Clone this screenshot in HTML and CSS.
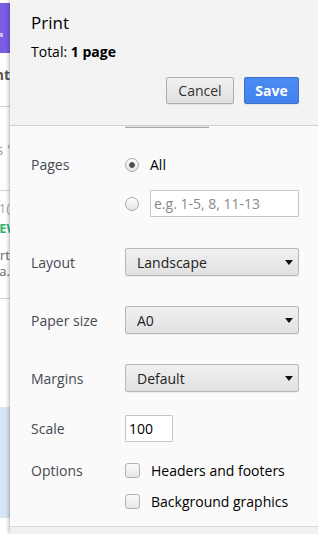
FILE: index.html
```html
<!DOCTYPE html>
<html lang="en">
<head>
    <meta charset="UTF-8">
    <meta name="viewport" content="width=device-width, initial-scale=1.0">
    <title>Print</title>
    <link rel="stylesheet" href="styles.css">
</head>
<body>
    <div class="screen">
        <!-- page behind the print dialog, only its right edge shows -->
        <div class="page">
            <div class="page-bar"><span class="bar-mark"></span></div>
            <div class="page-block block-title">
                <div class="frag frag-title"><span>Document</span></div>
            </div>
            <div class="page-block block-list">
                <div class="frag frag-muted"><span>Results '</span></div>
            </div>
            <div class="page-block block-item">
                <div class="frag frag-meta"><span>Updated 1(</span></div>
                <div class="frag frag-new"><span>NEW</span></div>
                <div class="frag frag-text"><span>Support</span></div>
                <div class="frag frag-text"><span>Read more a.</span></div>
            </div>
            <div class="page-gap"></div>
            <div class="page-selected"></div>
        </div>

        <div class="dialog">
            <header class="dialog-head">
                <h1>Print</h1>
                <div class="total">Total: <b>1 page</b></div>
                <div class="buttons">
                    <button class="btn">Cancel</button>
                    <button class="btn btn-primary">Save</button>
                </div>
            </header>

            <div class="dialog-body">
                <div class="stub"></div>

                <div class="section section-pages">
                    <div class="label">Pages</div>
                    <div class="controls">
                        <label class="row"><input type="radio" name="pages" checked>All</label>
                        <div class="row">
                            <input type="radio" name="pages">
                            <input type="text" class="text-input" placeholder="e.g. 1-5, 8, 11-13">
                        </div>
                    </div>
                </div>

                <div class="section section-layout">
                    <div class="label">Layout</div>
                    <div class="controls">
                        <div class="select"><select><option>Landscape</option><option>Portrait</option></select></div>
                    </div>
                </div>

                <div class="section">
                    <div class="label">Paper size</div>
                    <div class="controls">
                        <div class="select"><select><option>A0</option><option>A4</option></select></div>
                    </div>
                </div>

                <div class="section">
                    <div class="label">Margins</div>
                    <div class="controls">
                        <div class="select"><select><option>Default</option><option>None</option></select></div>
                    </div>
                </div>

                <div class="section section-scale">
                    <div class="label">Scale</div>
                    <div class="controls">
                        <input type="text" class="text-input scale-input" value="100">
                    </div>
                </div>

                <div class="section section-options">
                    <div class="label">Options</div>
                    <div class="controls">
                        <label class="row"><input type="checkbox">Headers and footers</label>
                        <label class="row"><input type="checkbox">Background graphics</label>
                    </div>
                </div>
            </div>

            <div class="dialog-foot"></div>
        </div>
    </div>
</body>
</html>
```

FILE: styles.css
```css
* {
    box-sizing: border-box;
}
body {
    margin: 0;
    font-family: "Open Sans", "Liberation Sans", Arial, sans-serif;
    font-size: 14px;
    color: #000;
}
.screen {
    display: flex;
    height: 534px;
    overflow: hidden;
}

/* page behind */
.page {
    width: 10px;
    flex-shrink: 0;
    background: #fff;
    display: flex;
    flex-direction: column;
}
.page-bar {
    height: 50px;
    margin-top: 3px;
    background: #7b5ee4;
    padding-top: 30px;
}
.bar-mark {
    display: block;
    width: 3px;
    height: 4px;
    background: #c9bdf3;
}
.page-block {
    border-bottom: 1px solid #d4d4d4;
}
.block-title {
    height: 54px;
    padding-top: 12px;
}
.block-list {
    height: 84px;
    padding-top: 33px;
}
.block-item {
    height: 108px;
    padding-top: 7px;
}
.page-gap {
    height: 108px;
}
.page-selected {
    height: 111px;
    background: #d7e6f6;
}
.frag {
    display: flex;
    justify-content: flex-end;
    overflow: hidden;
    white-space: nowrap;
    line-height: 20px;
}
.frag-title {
    font-weight: 700;
    color: #555;
}
.frag-muted {
    color: #999;
}
.frag-meta {
    font-size: 13px;
    color: #9aa8b6;
}
.frag-new {
    font-weight: 700;
    font-size: 13px;
    color: #2db46e;
}
.frag-new span {
    margin-right: -9px;
}
.frag-text {
    font-size: 13px;
    color: #666;
    line-height: 14px;
}
.frag-text:nth-child(3) {
    margin-top: 10px;
}
.frag-text:nth-child(4) {
    margin-top: 2px;
}

/* dialog */
.dialog {
    flex: 1;
    min-width: 0;
    display: flex;
    flex-direction: column;
    background: #fafafa;
    box-shadow: -1px 0 4px rgba(0, 0, 0, 0.3);
}
.dialog-head {
    height: 126px;
    background: #f3f3f3;
    border-bottom: 1px solid #d2d2d2;
    padding: 12px 19px 0 21px;
}
h1 {
    margin: 0;
    font-size: 17px;
    font-weight: 400;
    line-height: 21px;
}
.total {
    margin-top: 10px;
    line-height: 18px;
}
.buttons {
    margin-top: 16px;
    display: flex;
    justify-content: flex-end;
    gap: 10px;
}
.btn {
    height: 27px;
    width: 68px;
    padding: 0;
    font: inherit;
    color: #333;
    border: 1px solid #adadad;
    border-radius: 2px;
    background: linear-gradient(#f1f1f1, #e0e0e0);
    box-shadow: 0 1px 0 rgba(0, 0, 0, 0.06);
}
.btn-primary {
    width: 55px;
    color: #fff;
    font-weight: 700;
    border-color: #3d70c8;
    background: linear-gradient(#4b8cf2, #4282ee);
}

.dialog-body {
    flex: 1;
    padding: 0 19px 0 21px;
}
.stub {
    margin-left: 94px;
    width: 84px;
    height: 2px;
    background: #dedede;
    border-bottom: 1px solid #a9a9a9;
}
.section {
    display: flex;
    margin-top: 30px;
}
.section-pages {
    margin-top: 23px;
}
.section-layout {
    margin-top: 31px;
}
.section-scale {
    margin-top: 23px;
}
.section-options {
    margin-top: 21px;
}
.label {
    width: 94px;
    flex-shrink: 0;
    height: 28px;
    display: flex;
    align-items: center;
    color: #454a52;
}
.section-pages .label,
.section-scale .label {
    height: 27px;
}
.section-options .label {
    height: 15px;
}
.controls {
    flex: 1;
    min-width: 0;
    display: flex;
    flex-direction: column;
    gap: 12px;
}
.section-options .controls {
    gap: 16px;
}
.row {
    display: flex;
    align-items: center;
    gap: 11px;
    height: 27px;
}
.section-options .row {
    height: 15px;
}

input[type="radio"] {
    appearance: none;
    margin: 0;
    width: 14px;
    height: 14px;
    flex-shrink: 0;
    border: 1px solid #aaa;
    border-radius: 50%;
    background: linear-gradient(#fdfdfd, #e4e4e4);
}
input[type="radio"]:checked {
    background: radial-gradient(circle, #505050 2.5px, transparent 3.2px), linear-gradient(#fdfdfd, #e4e4e4);
}
input[type="checkbox"] {
    appearance: none;
    margin: 0;
    width: 15px;
    height: 15px;
    flex-shrink: 0;
    border: 1px solid #b3b3b3;
    border-radius: 3px;
    background: linear-gradient(#fafafa, #e6e6e6);
}
.text-input {
    flex: 1;
    width: 100%;
    height: 27px;
    min-width: 0;
    padding: 0 3px;
    font: inherit;
    color: #000;
    background: #fff;
    border: 1px solid #c6c6c6;
    border-radius: 1px;
}
.text-input::placeholder {
    color: #8a8a8a;
}
.scale-input {
    flex: none;
    width: 48px;
}

.select {
    position: relative;
    height: 28px;
}
.select select {
    appearance: none;
    width: 100%;
    height: 100%;
    padding: 0 0 0 11px;
    font: inherit;
    color: #222;
    border: 1px solid #b7b7b7;
    border-radius: 2px;
    background: linear-gradient(#f0f0f0, #e1e1e1);
    box-shadow: 0 1px 0 rgba(0, 0, 0, 0.05);
}
.select::after {
    content: "";
    position: absolute;
    right: 6px;
    top: 50%;
    margin-top: -2px;
    border-left: 4px solid transparent;
    border-right: 4px solid transparent;
    border-top: 5px solid #111;
    pointer-events: none;
}

.dialog-foot {
    height: 8px;
    background: #f1f1f1;
    border-top: 1px solid #d8d8d8;
}
```
